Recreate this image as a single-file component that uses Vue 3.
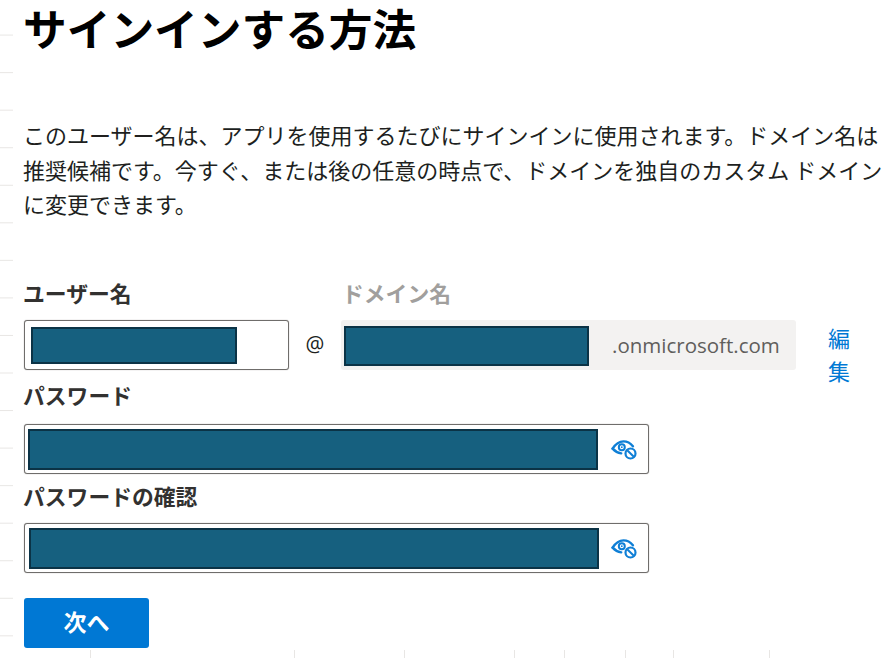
<script setup>
const passwordFields = [
  { label: 'パスワード', cls: 'pw-a' },
  { label: 'パスワードの確認', cls: 'pw-b' }
]
</script>

<template>
  <main class="page">
    <h1 class="title">サインインする方法</h1>
    <p class="intro">このユーザー名は、アプリを使用するたびにサインインに使用されます。ドメイン名は推奨候補です。今すぐ、または後の任意の時点で、ドメインを独自のカスタム ドメインに変更できます。</p>

    <div class="labels">
      <label class="label user-label">ユーザー名</label>
      <label class="label muted">ドメイン名</label>
    </div>
    <div class="name-row">
      <div class="box user-box"><span class="mask user-mask"></span></div>
      <span class="at">@</span>
      <div class="domain-box">
        <span class="mask domain-mask"></span>
        <span class="suffix">.onmicrosoft.com</span>
      </div>
      <a class="edit">編集</a>
    </div>

    <div v-for="f in passwordFields" :key="f.cls" class="pw-field" :class="f.cls">
      <label class="label">{{ f.label }}</label>
      <div class="box pw-box">
        <span class="mask pw-mask"></span>
        <svg class="eye" viewBox="0 0 26 20" width="26" height="20" fill="none" stroke="#0f7fd6">
          <path d="M1.6 8.6C5 3.4 9 1.4 12.5 1.4c3.6 0 6.8 1.6 9.4 4.8" stroke-width="2.4" stroke-linecap="round"/>
          <path d="M1.6 8.6c2.6 2.8 5.2 4.2 8.6 4.8" stroke-width="2.4" stroke-linecap="round"/>
          <circle cx="10.8" cy="7.2" r="3" stroke-width="2"/>
          <circle cx="10.8" cy="7.2" r="0.9" fill="#0f7fd6" stroke="none"/>
          <circle cx="19.5" cy="13.5" r="5" fill="#fff" stroke-width="2.2"/>
          <path d="M16.2 10.2l6.6 6.6" stroke-width="2"/>
        </svg>
      </div>
    </div>

    <button class="next">次へ</button>
  </main>
</template>

<style>
html, body { margin: 0; background: #fff; }
</style>

<style scoped>
.page {
  width: 891px;
  height: 658px;
  box-sizing: border-box;
  padding-left: 24px;
  overflow: hidden;
  color: #201f1e;
  font-family: "Noto Sans CJK JP", "Noto Sans", sans-serif;
  background-color: #fff;
  background-image:
    repeating-linear-gradient(to bottom, transparent 0, transparent 34.5px, #e8e6e4 34.5px, #e8e6e4 35.5px, transparent 35.5px, transparent 37.55px),
    linear-gradient(to right, #e8e6e4 1px, transparent 1px),
    linear-gradient(to right, #e8e6e4 1px, transparent 1px),
    linear-gradient(to right, #e8e6e4 1px, transparent 1px),
    linear-gradient(to right, #e8e6e4 1px, transparent 1px),
    linear-gradient(to right, #e8e6e4 1px, transparent 1px),
    linear-gradient(to right, #e8e6e4 1px, transparent 1px),
    linear-gradient(to right, #e8e6e4 1px, transparent 1px),
    linear-gradient(to right, #e8e6e4 1px, transparent 1px);
  background-repeat: repeat-y, no-repeat, no-repeat, no-repeat, no-repeat, no-repeat, no-repeat, no-repeat, no-repeat;
  background-size: 13px 37.55px, 1px 8px, 1px 8px, 1px 8px, 1px 8px, 1px 8px, 1px 8px, 1px 8px, 1px 8px;
  background-position: 0 0, 90px 650px, 294px 650px, 404px 650px, 514px 650px, 564px 650px, 625px 650px, 673px 650px, 769px 650px;
}
.title {
  margin: 0 0 0 -1px;
  height: 56px;
  font-size: 43.7px;
  line-height: 54px;
  font-weight: 700;
  color: #000;
}
.intro {
  margin: 61px 0 0 -1px;
  width: 867px;
  font-size: 22px;
  line-height: 34.5px;
}
.labels {
  display: flex;
  margin-top: 57px;
  height: 30px;
}
.label {
  display: block;
  margin-left: -1px;
  font-size: 21.8px;
  line-height: 30px;
  font-weight: 700;
  color: #323130;
}
.user-label { width: 319px; }
.muted { color: #a19f9d; margin-left: 0; }
.name-row {
  display: flex;
  margin-top: 12px;
  height: 50px;
}
.box {
  box-sizing: border-box;
  border: 1px solid #6f6d6b;
  border-radius: 3px;
  background: #fff;
  box-shadow: 0 0 1px #8a8886;
}
.user-box {
  width: 265px;
  height: 50px;
  display: flex;
  align-items: center;
  padding-left: 6px;
}
.mask {
  display: block;
  box-sizing: border-box;
  background: #16607f;
  border: 2px solid #0b3346;
}
.user-mask { width: 206px; height: 37px; margin-top: 2px; }
.at {
  width: 52px;
  text-align: center;
  font-size: 21px;
  line-height: 48px;
  color: #201f1e;
  font-family: "Open Sans", sans-serif;
}
.domain-box {
  box-sizing: border-box;
  width: 455px;
  height: 50px;
  padding-left: 3px;
  display: flex;
  align-items: center;
  background: #f3f2f1;
  border-radius: 3px;
}
.domain-mask { width: 245px; height: 40px; margin-top: 3px; }
.suffix {
  margin-left: 23px;
  padding-top: 1px;
  font-family: "Open Sans", sans-serif;
  font-size: 20.5px;
  color: #605e5c;
  white-space: nowrap;
}
.edit {
  width: 22px;
  margin-left: 32px;
  padding-top: 1px;
  font-size: 22px;
  line-height: 33px;
  color: #0078d4;
  word-break: break-all;
}
.pw-field { width: 625px; }
.pw-a { margin-top: 10px; }
.pw-b { margin-top: 7px; }
.pw-box {
  width: 625px;
  height: 50px;
  margin-top: 14px;
  display: flex;
  align-items: center;
  justify-content: space-between;
  padding: 0 11px 0 3px;
}
.pw-b .pw-box { margin-top: 12px; padding-left: 4px; }
.pw-mask { width: 570px; height: 41px; margin-top: 1px; }
.eye { flex: none; margin-top: 2px; }
.next {
  display: block;
  width: 125px;
  height: 50px;
  margin-top: 25px;
  padding: 0 0 4px;
  border: 0;
  border-radius: 3px;
  background: #0078d4;
  color: #fff;
  font-family: inherit;
  font-size: 23px;
  font-weight: 700;
}
</style>
